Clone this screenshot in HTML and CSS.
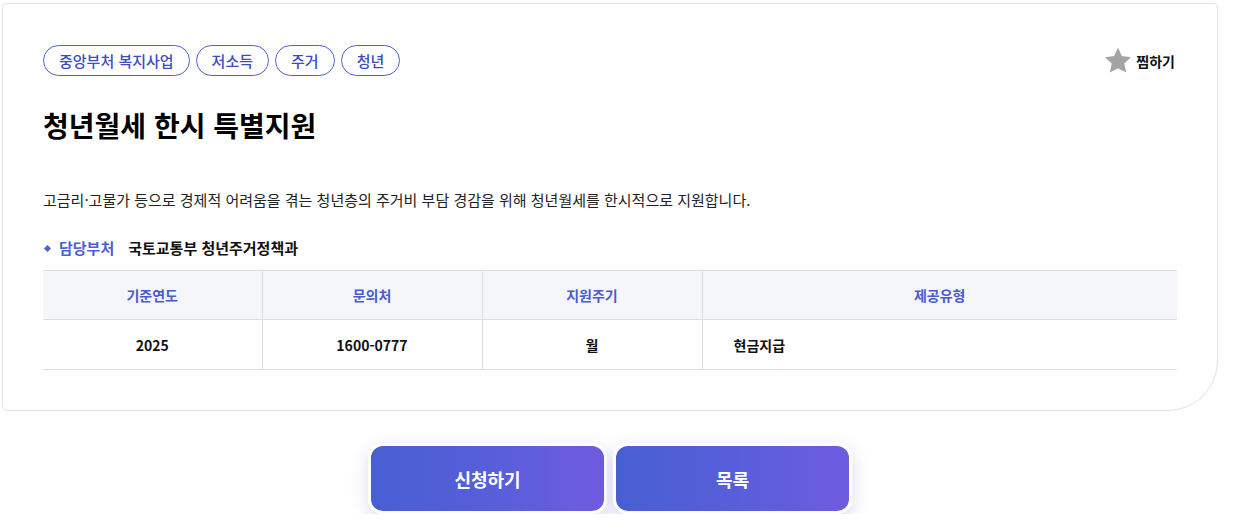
FILE: index.html
```html
<!DOCTYPE html>
<html lang="ko">
<head>
<meta charset="utf-8">
<title>청년월세 한시 특별지원</title>
<link rel="stylesheet" href="styles.css">
</head>
<body>
<div class="page">
  <section class="card">
    <div class="top-row">
      <ul class="tags">
        <li class="tag">중앙부처 복지사업</li>
        <li class="tag">저소득</li>
        <li class="tag">주거</li>
        <li class="tag">청년</li>
      </ul>
      <button class="fav" type="button">
        <svg class="star" width="30" height="30" viewBox="0 0 24 24" aria-hidden="true"><path d="M12 1.4l3.1 6.6 7.3.9-5.4 5 1.5 7.3L12 17.7l-6.5 3.5 1.5-7.3-5.4-5 7.3-.9z" fill="#a4a4a4"/></svg>
        <span>찜하기</span>
      </button>
    </div>
    <h1 class="title">청년월세 한시 특별지원</h1>
    <p class="desc">고금리·고물가 등으로 경제적 어려움을 겪는 청년층의 주거비 부담 경감을 위해 청년월세를 한시적으로 지원합니다.</p>
    <div class="dept">
      <span class="bullet"></span>
      <span class="dept-label">담당부처</span>
      <span class="dept-name">국토교통부 청년주거정책과</span>
    </div>
    <table class="info">
      <thead>
        <tr><th class="c1">기준연도</th><th class="c2">문의처</th><th class="c3">지원주기</th><th class="c4">제공유형</th></tr>
      </thead>
      <tbody>
        <tr><td>2025</td><td>1600-0777</td><td>월</td><td class="left">현금지급</td></tr>
      </tbody>
    </table>
  </section>
  <div class="actions">
    <button class="btn" type="button">신청하기</button>
    <button class="btn" type="button">목록</button>
  </div>
</div>
</body>
</html>
```

FILE: styles.css
```css
* { box-sizing: border-box; }
html, body { margin: 0; padding: 0; background: #ffffff; }
body {
  font-family: "Noto Sans CJK KR", "Noto Sans", sans-serif;
  color: #111111;
}
.page {
  width: 1216px;
  margin: 3px 0 0 2px;
}
.card {
  border: 1px solid #e1e1e1;
  border-radius: 5px 5px 50px 5px;
  padding: 41px 40px 40px 40px;
  background: #fff;
}
.top-row {
  display: flex;
  align-items: center;
  justify-content: space-between;
}
.tags {
  display: flex;
  gap: 6px;
  list-style: none;
  margin: 0;
  padding: 0;
}
.tag {
  height: 31px;
  padding: 0 15px;
  border: 1px solid #4d61cf;
  border-radius: 16px;
  color: #3a4cbf;
  font-size: 15px;
  line-height: 29px;
  font-weight: 500;
}
.fav {
  display: flex;
  align-items: center;
  gap: 3px;
  border: 0;
  background: none;
  padding: 0;
  margin-right: 2px;
  font-family: inherit;
  font-size: 14px;
  font-weight: 700;
  color: #111;
}
.title {
  margin: 29px 0 0 0;
  font-size: 28px;
  line-height: 40px;
  font-weight: 700;
  color: #000;
}
.desc {
  margin: 44px 0 0 0;
  font-size: 15px;
  line-height: 22px;
  color: #222;
}
.dept {
  display: flex;
  align-items: center;
  margin-top: 26px;
  font-size: 15px;
  line-height: 22px;
  font-weight: 700;
}
.bullet {
  width: 5px;
  height: 5px;
  background: #4d61cf;
  transform: rotate(45deg);
  margin: 0 9px 0 2px;
}
.dept-label { color: #4d5fd4; margin-right: 14px; }
.dept-name { color: #111; }
.info {
  width: 100%;
  margin-top: 11px;
  border-collapse: collapse;
  font-size: 14px;
}
.info th, .info td {
  border-top: 1px solid #dedede;
  border-bottom: 1px solid #dedede;
  border-left: 1px solid #dedede;
  text-align: center;
}
.info tr > :first-child { border-left: 0; }
.info th {
  height: 49px;
  background: #f5f6fa;
  color: #4a5bd0;
  font-weight: 600;
}
.info td {
  height: 50px;
  font-weight: 600;
  color: #111;
}
.info td.left { text-align: left; padding-left: 31px; }
.c1 { width: 219px; }
.c2 { width: 220px; }
.c3 { width: 220px; }
.actions {
  display: flex;
  justify-content: center;
  gap: 6px;
  margin-top: 32px;
}
.btn {
  width: 239px;
  height: 71px;
  border: 3px solid #fff;
  border-radius: 15px;
  background: linear-gradient(90deg, #475fd2 0%, #5b5edb 60%, #6f5be0 100%);
  color: #fff;
  font-family: inherit;
  font-size: 18px;
  font-weight: 700;
  box-shadow: 0 6px 18px rgba(90, 90, 200, 0.22);
}
```
